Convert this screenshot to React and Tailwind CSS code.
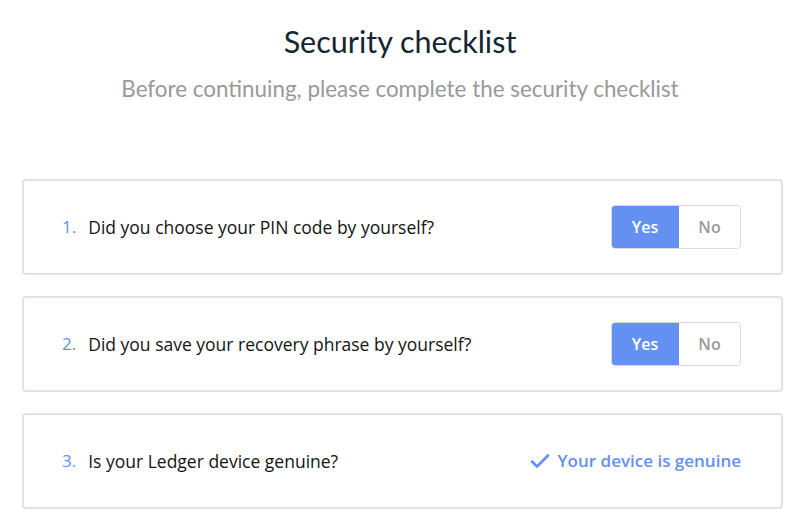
import React from "react";

function Toggle() {
  return (
    <div className="flex h-[44px] rounded-[4px] border border-[#d8d8d8] overflow-hidden">
      <div className="w-[68px] flex items-center justify-center bg-[#6490f1] text-white font-semibold text-[16px] -my-px -ml-px rounded-l-[4px]">Yes</div>
      <div className="w-[61px] flex items-center justify-center bg-white text-[#999] font-semibold text-[16px]">No</div>
    </div>
  );
}

function Card({ n, q, right }) {
  return (
    <div className="h-[96px] rounded-[4px] border-2 border-[#e2e2e2] bg-white flex items-center pl-[38px] pr-[40px]">
      <span className="text-[#6490f1] text-[17px] mr-[12px]">{n}.</span>
      <span className="text-[#141414] text-[17.5px] font-medium flex-1">{q}</span>
      {right}
    </div>
  );
}

export default function App() {
  return (
    <div className="w-[800px] h-[524px] bg-white overflow-hidden" style={{ fontFamily: '"Open Sans", sans-serif' }}>
      <div className="pt-[20px] text-center" style={{ fontFamily: 'Lato, sans-serif' }}>
        <h1 className="text-[30.5px] text-[#142533] leading-[42px]">Security checklist</h1>
        <p className="mt-[12px] text-[22.4px] text-[#999] leading-[30px]">Before continuing, please complete the security checklist</p>
      </div>
      <div className="mt-[75px] ml-[22px] w-[761px] flex flex-col gap-[21px]">
        <Card n="1" q="Did you choose your PIN code by yourself?" right={<Toggle />} />
        <Card n="2" q="Did you save your recovery phrase by yourself?" right={<Toggle />} />
        <Card
          n="3"
          q="Is your Ledger device genuine?"
          right={
            <div className="flex items-center gap-[8px] text-[#6490f1] font-semibold text-[17px]">
              <svg width="20" height="16" viewBox="0 0 20 16" fill="none" stroke="#6490f1" strokeWidth="2.6" strokeLinecap="round" strokeLinejoin="round">
                <path d="M2 8.5 L7 13.5 L18 2.5" />
              </svg>
              <span>Your device is genuine</span>
            </div>
          }
        />
      </div>
    </div>
  );
}
